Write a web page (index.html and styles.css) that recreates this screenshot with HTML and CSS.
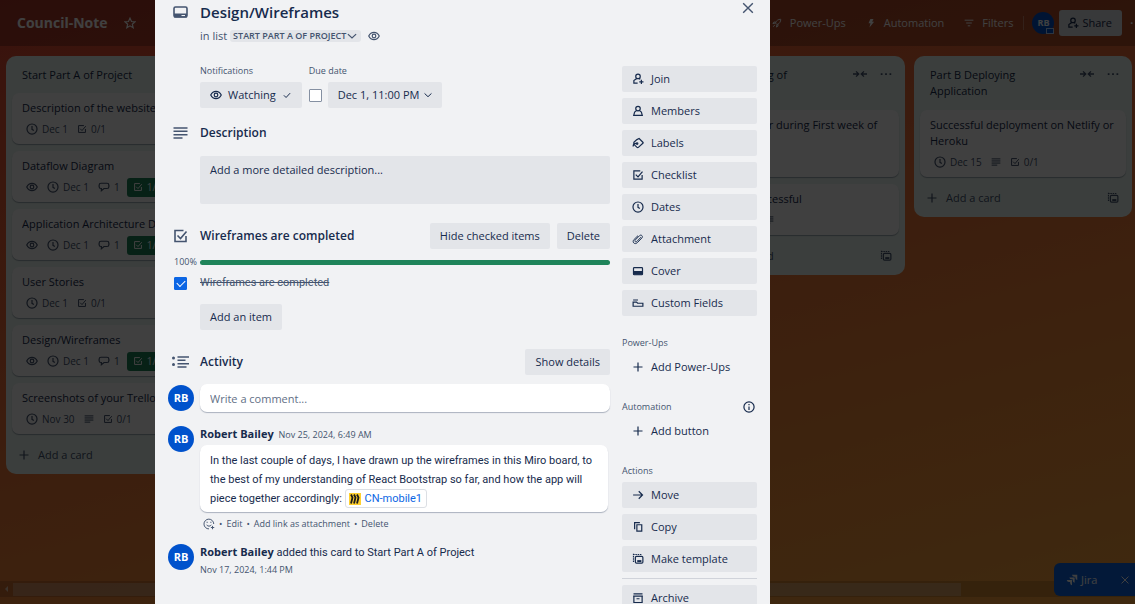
FILE: index.html
```html
<!DOCTYPE html>
<html lang="en">
<head>
<meta charset="utf-8">
<title>Design/Wireframes on Council-Note</title>
<link rel="stylesheet" href="styles.css">
</head>
<body>
<svg class="sprite" aria-hidden="true">
  <symbol id="i-eye" viewBox="0 0 16 16"><path d="M1 8C2.500 5 5 3.200 8 3.200S13.500 5 15 8C13.500 11 11 12.800 8 12.800S2.500 11 1 8z"/><circle cx="8" cy="8" r="2.400"/></symbol>
  <symbol id="i-clock" viewBox="0 0 16 16"><circle cx="8" cy="8" r="6.700"/><path d="M8 4v4.500l2.500 1.500"/></symbol>
  <symbol id="i-check" viewBox="0 0 16 16"><path d="M13.500 8v5.500h-11v-11H11M5 7.500l3 3 6-7"/></symbol>
  <symbol id="i-chat" viewBox="0 0 16 16"><path d="M4 3h8c1.400 0 2.500 1 2.500 2.500v2C14.500 9 13.400 10 12 10H8l-3.500 3v-3H4C2.600 10 1.500 9 1.500 7.500v-2C1.500 4 2.600 3 4 3z"/></symbol>
  <symbol id="i-lines" viewBox="0 0 16 16"><path d="M1 3h14M1 6.300h14M1 9.700h14M1 13h9"/></symbol>
  <symbol id="i-plus" viewBox="0 0 16 16"><path d="M8 2v12M2 8h12"/></symbol>
  <symbol id="i-close" viewBox="0 0 16 16"><path d="M2.500 2.500l11 11M13.500 2.500l-11 11"/></symbol>
  <symbol id="i-down" viewBox="0 0 16 16"><path d="M2.500 5.500L8 10.700l5.500-5.200"/></symbol>
  <symbol id="i-tick" viewBox="0 0 16 16"><path d="M3 8.500l3.500 3.500L13 5"/></symbol>
  <symbol id="i-star" viewBox="0 0 16 16"><path d="M8 1.500l2 4.500 4.700.4-3.600 3.200 1.100 4.700L8 11.800l-4.200 2.500 1.100-4.700L1.300 6.400 6 6z"/></symbol>
  <symbol id="i-join" viewBox="0 0 16 16"><circle cx="8" cy="4.500" r="3"/><path d="M6.300 7.200L2.500 10v3.500h5M9.500 7.300l1.500 1M12.500 9v5.500M9.700 11.700h5.600"/></symbol>
  <symbol id="i-member" viewBox="0 0 16 16"><circle cx="8" cy="4.700" r="3"/><path d="M6.300 7.200L3.500 9.500 2.300 13.700h11.400L12.500 9.500 9.700 7.200"/></symbol>
  <symbol id="i-label" viewBox="0 0 16 16"><path d="M6.500 3.500l3-1.500 5 5c.4.400.4 1 0 1.400l-6 5.400c-.6.500-1.200.5-1.800 0L2.500 9.800V7z"/><path d="M1.500 12.500c0-2.500 2-4 4-4"/><circle cx="6.800" cy="8.700" r="1"/></symbol>
  <symbol id="i-clip" viewBox="0 0 16 16"><path d="M12 5.500l-5.500 5.800c-.7.700-1.600.7-2.200.1-.6-.6-.5-1.500.2-2.200L10 3.600c1-1 2.300-1 3.200-.1.900.9.900 2.200-.1 3.200l-6 6.200c-1.600 1.600-3.600 1.500-4.700.4-1.200-1.200-1.200-3.100.4-4.700L8 3.500" stroke-width="1.300"/></symbol>
  <symbol id="i-cover" viewBox="0 0 16 16"><rect x="2" y="3.500" width="12" height="9.500" rx="1"/><path class="solid" d="M2 8h12v5H2z"/></symbol>
  <symbol id="i-fields" viewBox="0 0 16 16"><path d="M1.500 4h6.500M1.500 6.800h4.500l1.500 1.500h7v4h-13z"/></symbol>
  <symbol id="i-info" viewBox="0 0 16 16"><circle cx="8" cy="8" r="6.800"/><path d="M8 7.200V12M8 4v1.600"/></symbol>
  <symbol id="i-arrow" viewBox="0 0 16 16"><path d="M1.500 8h12.500M9 3l5 5-5 5"/></symbol>
  <symbol id="i-copy" viewBox="0 0 16 16"><path d="M6.500 5h6.500v8.500H6.500z"/><path d="M3.500 11V2.200h7"/></symbol>
  <symbol id="i-template" viewBox="0 0 16 16"><rect x="4.500" y="4.500" width="10" height="9" rx="1.500"/><path class="solid" d="M7 9.500h5.500v2.500H7z"/><path d="M2 1v11.500M1.500 2h11" stroke-dasharray="2 1"/></symbol>
  <symbol id="i-archive" viewBox="0 0 16 16"><path d="M2 2.500h12M1.500 5.500h13M2.500 6v8h11V6M6 9h4"/></symbol>
  <symbol id="i-card" viewBox="0 0 16 16"><rect x="1.500" y="3" width="13" height="10" rx="1.500"/><path class="solid" d="M1.500 9.500h13v4h-13zM9 11v1.300h3.500V11z" fill-rule="evenodd"/></symbol>
  <symbol id="i-activity" viewBox="0 0 18 16"><path d="M6 3h11.500M6 6.300h8M6 9.700h11.500M6 13h9"/><circle class="solid" cx="2" cy="4" r="1.500"/><circle class="solid" cx="2" cy="10.500" r="1.500"/></symbol>
  <symbol id="i-collapse" viewBox="0 0 16 16"><path d="M0 8h6M3.500 5L6.500 8l-3 3M16 8h-6M12.500 5l-3 3 3 3"/></symbol>
  <symbol id="i-dots" viewBox="0 0 16 16"><path class="solid" d="M2 7h2v2H2zM7 7h2v2H7zM12 7h2v2h-2z"/></symbol>
  <symbol id="i-rocket" viewBox="0 0 16 16"><path d="M5.500 8C7 4 10 2 14 2c0 4-2 7-6 8.500zM6 6.500H3L1.500 9l4-1M9.500 10v3L7 14.500 8 10.500M4.500 11l-2.500 3"/></symbol>
  <symbol id="i-bolt" viewBox="0 0 16 16"><path class="solid" d="M7 1.500h5L9.800 6H13l-7.500 9 1.700-6.500H4z"/></symbol>
  <symbol id="i-filter" viewBox="0 0 16 16"><path d="M1 3.500h14M3.500 8h9M6 12.500h4"/></symbol>
  <symbol id="i-smile" viewBox="0 0 16 16"><path d="M14.300 8A6.500 6.500 0 1 0 8 14.500M5 9c.5 2.500 5.500 2.500 6 0M5.500 5v1.500M10.500 5v1.500M12.700 10.500v4.500M10.500 12.700h4.500" stroke-width="1.300"/></symbol>
  <symbol id="i-jira" viewBox="0 0 16 16"><path class="solid" d="M8 1h7v7a3 3 0 0 1-2.500-3V3.500H11A3 3 0 0 1 8 1zM4.500 4.500h7v7A3 3 0 0 1 9 8.500V7H7.500a3 3 0 0 1-3-2.500zM1 8h7v7a3 3 0 0 1-2.500-3v-1.500H4A3 3 0 0 1 1 8z"/></symbol>
</svg>

<div class="board">
  <header class="topbar">
    <h1 class="board-name">Council-Note</h1>
    <button class="bare star" aria-label="Star board"><svg class="ic"><use href="#i-star"/></svg></button>
    <nav class="tools">
      <button class="bare tool"><svg class="ic s10"><use href="#i-rocket"/></svg>Power-Ups</button>
      <button class="bare tool"><svg class="ic s10"><use href="#i-bolt"/></svg>Automation</button>
      <button class="bare tool"><svg class="ic s10"><use href="#i-filter"/></svg>Filters</button>
      <span class="rule"></span>
      <span class="avatar small">RB<i class="rank"></i></span>
      <button class="share"><svg class="ic"><use href="#i-join"/></svg>Share</button>
      <button class="bare more" aria-label="More"><svg class="ic s14"><use href="#i-dots"/></svg></button>
    </nav>
  </header>

  <main class="lists">
    <section class="list first">
      <h2 class="list-name">Start Part A of Project</h2>
      <article class="card"><h3>Description of the website</h3><p class="badges"><span><svg class="ic"><use href="#i-clock"/></svg>Dec 1</span><span><svg class="ic s10"><use href="#i-check"/></svg>0/1</span></p></article>
      <article class="card"><h3>Dataflow Diagram</h3><p class="badges"><svg class="ic"><use href="#i-eye"/></svg><span><svg class="ic"><use href="#i-clock"/></svg>Dec 1</span><span><svg class="ic"><use href="#i-chat"/></svg>1</span><span class="done"><svg class="ic s10"><use href="#i-check"/></svg>1/1</span></p></article>
      <article class="card"><h3>Application Architecture Diagram</h3><p class="badges"><svg class="ic"><use href="#i-eye"/></svg><span><svg class="ic"><use href="#i-clock"/></svg>Dec 1</span><span><svg class="ic"><use href="#i-chat"/></svg>1</span><span class="done"><svg class="ic s10"><use href="#i-check"/></svg>1/1</span></p></article>
      <article class="card"><h3>User Stories</h3><p class="badges"><span><svg class="ic"><use href="#i-clock"/></svg>Dec 1</span><span><svg class="ic s10"><use href="#i-check"/></svg>0/1</span></p></article>
      <article class="card"><h3>Design/Wireframes</h3><p class="badges"><svg class="ic"><use href="#i-eye"/></svg><span><svg class="ic"><use href="#i-clock"/></svg>Dec 1</span><span><svg class="ic"><use href="#i-chat"/></svg>1</span><span class="done"><svg class="ic s10"><use href="#i-check"/></svg>1/1</span></p></article>
      <article class="card"><h3>Screenshots of your Trello</h3><p class="badges"><span><svg class="ic"><use href="#i-clock"/></svg>Nov 30</span><svg class="ic s10"><use href="#i-lines"/></svg><span><svg class="ic s10"><use href="#i-check"/></svg>0/1</span></p></article>
      <div class="list-foot"><button class="bare add"><svg class="ic"><use href="#i-plus"/></svg>Add a card</button><svg class="ic"><use href="#i-template"/></svg></div>
    </section>

    <section class="list fourth">
      <div class="list-head"><h2 class="list-name">Part A Testing of Application</h2><svg class="ic s14"><use href="#i-collapse"/></svg><svg class="ic s14"><use href="#i-dots"/></svg></div>
      <article class="card tall"><h3>Completed or during First week of<br>December</h3></article>
      <article class="card"><h3>Unit test successful</h3><p class="badges"><span><svg class="ic"><use href="#i-clock"/></svg>Dec 15</span><svg class="ic s10"><use href="#i-lines"/></svg></p></article>
      <div class="list-foot"><button class="bare add"><svg class="ic"><use href="#i-plus"/></svg>Add a card</button><svg class="ic"><use href="#i-template"/></svg></div>
    </section>

    <section class="list fifth">
      <div class="list-head"><h2 class="list-name">Part B Deploying Application</h2><svg class="ic s14"><use href="#i-collapse"/></svg><svg class="ic s14"><use href="#i-dots"/></svg></div>
      <article class="card tall"><h3>Successful deployment on Netlify or Heroku</h3><p class="badges"><span><svg class="ic"><use href="#i-clock"/></svg>Dec 15</span><svg class="ic s10"><use href="#i-lines"/></svg><span><svg class="ic s10"><use href="#i-check"/></svg>0/1</span></p></article>
      <div class="list-foot"><button class="bare add"><svg class="ic"><use href="#i-plus"/></svg>Add a card</button><svg class="ic"><use href="#i-template"/></svg></div>
    </section>
  </main>
  <div class="scroller"><i class="scroll-arrow"></i><i class="thumb"></i></div>
  <div class="jira"><svg class="ic"><use href="#i-jira"/></svg>Jira<button class="bare" aria-label="Dismiss"><svg class="ic s10"><use href="#i-close"/></svg></button></div>
</div>

<div class="overlay">
  <div class="dialog" role="dialog" aria-labelledby="card-title">
    <header class="row head">
      <svg class="ic s16 lead"><use href="#i-card"/></svg>
      <h2 id="card-title" class="title">Design/Wireframes</h2>
      <button class="bare close" aria-label="Close"><svg class="ic s14"><use href="#i-close"/></svg></button>
    </header>
    <p class="in-list">in list <button class="where">START PART A OF PROJECT<svg class="ic"><use href="#i-down"/></svg></button><svg class="ic"><use href="#i-eye"/></svg></p>

    <div class="columns">
      <div class="content">
        <div class="facts">
          <div><h4 class="small-label">Notifications</h4><button class="btn"><svg class="ic"><use href="#i-eye"/></svg>Watching<svg class="ic s10"><use href="#i-tick"/></svg></button></div>
          <div><h4 class="small-label">Due date</h4><div class="due"><input type="checkbox" class="box" aria-label="Due date complete"><button class="btn">Dec 1, 11:00 PM<svg class="ic s10"><use href="#i-down"/></svg></button></div></div>
        </div>

        <section class="description">
          <div class="row"><svg class="ic s16 lead"><use href="#i-lines"/></svg><h3 class="heading">Description</h3></div>
          <button class="desc-box">Add a more detailed description...</button>
        </section>

        <section class="checklist">
          <div class="row"><svg class="ic s16 lead"><use href="#i-check"/></svg><h3 class="heading">Wireframes are completed</h3><button class="btn">Hide checked items</button><button class="btn">Delete</button></div>
          <div class="row progress"><span class="percent">100%</span><div class="bar"></div></div>
          <div class="row item"><input type="checkbox" id="item" class="box lead" checked><label for="item">Wireframes are completed</label></div>
          <button class="btn add-item">Add an item</button>
        </section>

        <section class="activity">
          <div class="row"><svg class="ic s18 lead"><use href="#i-activity"/></svg><h3 class="heading">Activity</h3><button class="btn">Show details</button></div>
          <div class="row write"><span class="avatar lead">RB</span><input type="text" class="comment-input" placeholder="Write a comment..." aria-label="Write a comment"></div>
          <div class="row entry"><span class="avatar lead">RB</span>
            <div class="entry-body">
              <p class="who"><b>Robert Bailey</b> <a class="when" href="#">Nov 25, 2024, 6:49 AM</a></p>
              <div class="bubble">In the last couple of days, I have drawn up the wireframes in this Miro board, to the best of my understanding of React Bootstrap so far, and how the app will<br>piece together accordingly: <a class="chip" href="#"><svg class="miro" viewBox="0 0 12 12"><rect width="12" height="12" fill="#ffd02f"/><path d="M2 1.500l1.500 3L2 10.500M5 1.500l1.500 3L5 10.500M8 1.500l1.500 3L8 10.500" fill="none" stroke="#1c1c1e" stroke-width="1.800"/></svg>CN-mobile1</a></div>
              <p class="acts"><button class="bare" aria-label="React"><svg class="ic"><use href="#i-smile"/></svg></button><span>•</span><a href="#">Edit</a><span>•</span><a href="#">Add link as attachment</a><span>•</span><a href="#">Delete</a></p>
            </div>
          </div>
          <div class="row entry second"><span class="avatar lead">RB</span>
            <div class="entry-body"><p class="who"><b>Robert Bailey</b> <span class="event">added this card to Start Part A of Project</span></p><p class="who"><a class="when" href="#">Nov 17, 2024, 1:44 PM</a></p></div>
          </div>
        </section>
      </div>

      <aside class="side">
        <button class="btn"><svg class="ic"><use href="#i-join"/></svg>Join</button>
        <button class="btn"><svg class="ic"><use href="#i-member"/></svg>Members</button>
        <button class="btn"><svg class="ic"><use href="#i-label"/></svg>Labels</button>
        <button class="btn"><svg class="ic"><use href="#i-check"/></svg>Checklist</button>
        <button class="btn"><svg class="ic"><use href="#i-clock"/></svg>Dates</button>
        <button class="btn"><svg class="ic"><use href="#i-clip"/></svg>Attachment</button>
        <button class="btn"><svg class="ic"><use href="#i-cover"/></svg>Cover</button>
        <button class="btn"><svg class="ic"><use href="#i-fields"/></svg>Custom Fields</button>
        <h4 class="small-label group">Power-Ups</h4>
        <button class="btn ghost"><svg class="ic"><use href="#i-plus"/></svg>Add Power-Ups</button>
        <h4 class="small-label group">Automation<svg class="ic"><use href="#i-info"/></svg></h4>
        <button class="btn ghost"><svg class="ic"><use href="#i-plus"/></svg>Add button</button>
        <h4 class="small-label group">Actions</h4>
        <button class="btn"><svg class="ic"><use href="#i-arrow"/></svg>Move</button>
        <button class="btn"><svg class="ic"><use href="#i-copy"/></svg>Copy</button>
        <button class="btn"><svg class="ic"><use href="#i-template"/></svg>Make template</button>
        <hr>
        <button class="btn"><svg class="ic"><use href="#i-archive"/></svg>Archive</button>
      </aside>
    </div>
  </div>
</div>
</body>
</html>
```
FILE: styles.css
```css
* { box-sizing: border-box; }
html, body { height: 100%; }
body {
  margin: 0;
  overflow: hidden;
  font: 11px/16px "Open Sans", "Noto Sans", sans-serif;
  color: #172b4d;
}
h1, h2, h3, h4, p { margin: 0; font-size: 11px; font-weight: 400; }
button, input { font: inherit; color: inherit; }
button { cursor: pointer; }
a { color: inherit; text-decoration: none; }
.sprite { display: none; }
.ic { width: 12px; height: 12px; flex: none; fill: none; stroke: currentColor; stroke-width: 1.6; }
.ic.s10 { width: 10px; height: 10px; }
.ic.s14 { width: 14px; height: 14px; }
.ic.s16 { width: 16px; height: 16px; }
.ic.s18 { width: 18px; height: 16px; }
.solid { fill: currentColor; stroke: none; }
.bare { display: flex; align-items: center; padding: 0; border: 0; background: none; }

/* Board */
.board {
  position: relative;
  display: flex;
  flex-direction: column;
  height: 100vh;
  overflow: hidden;
  background: linear-gradient(165deg, #e34935, #faa53d);
}
.topbar {
  display: flex;
  align-items: center;
  flex: none;
  height: 46px;
  padding-left: 17px;
  background: rgba(0, 0, 0, .24);
  color: #fff;
}
.board-name { font-size: 14px; line-height: 20px; font-weight: 700; }
.star { margin-left: 16px; }
.tools { display: flex; align-items: center; margin-left: auto; white-space: nowrap; }
.tool { gap: 8px; margin-right: 20px; font-weight: 500; }
.rule { width: 1px; height: 14px; margin-right: 8px; margin-left: -10px; background: rgba(255, 255, 255, .3); }
.avatar {
  position: relative;
  display: grid;
  place-items: center;
  flex: none;
  width: 26px;
  height: 26px;
  border-radius: 50%;
  background: #0052cc;
  color: #fff;
  font-size: 11px;
  font-weight: 700;
}
.avatar.small { width: 22px; height: 22px; font-size: 9px; }
.rank { position: absolute; right: 0; bottom: 0; width: 8px; height: 6px; border: 1px solid #b3d4ff; background: #0052cc; }
.share {
  display: flex;
  align-items: center;
  gap: 3px;
  height: 26px;
  margin: 0 7px 0 5px;
  padding: 0 10px 0 8px;
  border: 0;
  border-radius: 3px;
  background: #dfe1e6;
  color: #172b4d;
  font-weight: 500;
}
.more { width: 6px; overflow: hidden; }

.lists {
  display: grid;
  grid-template-columns: repeat(5, 218px);
  gap: 9px;
  align-items: start;
  flex: 1;
  min-height: 0;
  padding: 10px 6px;
}
.list {
  display: flex;
  flex-direction: column;
  gap: 7px;
  padding: 11px 6px 11px;
  border-radius: 10px;
  background: #ecf8f2;
}
.first { grid-column: 1; }
.fourth { grid-column: 4; }
.fifth { grid-column: 5; }
.list-name { flex: 1; padding: 0 10px 3px; font-weight: 500; }
.list-head { display: flex; gap: 12px; padding: 0 6px 1px 0; color: #44546f; }
.list-head .list-name { padding-right: 24px; color: #172b4d; }
.card { min-height: 51px; padding: 7px 10px 6px; border-radius: 7px; background: #fff; box-shadow: 0 1px 1px rgba(9, 30, 66, .35); }
.card.tall { min-height: 67px; }
.card h3 { white-space: nowrap; overflow: hidden; }
.card.tall h3 { white-space: normal; }
.badges { display: flex; align-items: center; gap: 9px; height: 18px; margin-top: 4px; padding-left: 4px; color: #44546f; font-size: 10px; }
.badges span { display: flex; align-items: center; gap: 4px; }
.badges .done { height: 19px; margin-left: -2px; padding: 0 6px; border-radius: 3px; background: #1f845a; color: #fff; }
.list-foot { display: flex; align-items: center; justify-content: space-between; padding: 6px 7px 0 6px; color: #44546f; }
.add { gap: 8px; font-weight: 500; }

.scroller { display: flex; align-items: center; flex: none; height: 16px; margin-bottom: 7px; background: rgba(0, 0, 0, .15); }
.scroll-arrow { margin: 0 5px 0 2px; border: 3px solid transparent; border-right-color: #fff9; }
.thumb { width: 83.5%; height: 13px; background: rgba(255, 255, 255, .25); }
.jira {
  position: absolute;
  right: 0;
  bottom: 8px;
  display: flex;
  align-items: center;
  gap: 3px;
  width: 81px;
  height: 33px;
  padding: 0 5px 0 12px;
  border-radius: 6px 0 0 6px;
  background: #0c66e4;
  color: #fff;
}
.jira .bare { margin-left: auto; }

/* Card dialog */
.overlay {
  position: fixed;
  inset: 0;
  display: flex;
  justify-content: center;
  align-items: flex-start;
  padding-right: 210px;
  overflow: hidden;
  background: rgba(0, 0, 0, .75);
}
.dialog { width: 615px; min-height: 100%; padding: 2px 13px 20px; background: #f1f2f4; }
.row { display: flex; align-items: center; }
.row .lead { flex: none; }
.row > svg.lead { width: 32px; padding-right: 7px; color: #44546f; }
.title { flex: 1; font-size: 15px; line-height: 20px; font-weight: 600; }
.close { align-self: flex-start; margin: -1px 2px 0 0; color: #44546f; }
.in-list { display: flex; align-items: center; gap: 3px; height: 16px; margin-top: 6px; padding-left: 32px; color: #44546f; }
.in-list > .ic { margin-left: 4px; }
.where {
  display: flex;
  align-items: center;
  height: 12px;
  padding: 0 3px;
  border: 0;
  border-radius: 3px;
  background: #e3e5e9;
  font-size: 9px;
  font-weight: 600;
}
.columns { display: flex; gap: 12px; margin-top: 19px; }
.content { flex: 1; min-width: 0; }
.side { display: flex; flex-direction: column; gap: 6px; flex: none; width: 135px; padding-top: 3px; }
.small-label { font-size: 9px; line-height: 16px; font-weight: 500; color: #44546f; }
.btn {
  display: flex;
  align-items: center;
  gap: 6px;
  height: 26px;
  padding: 0 10px;
  border: 0;
  border-radius: 2px;
  background: #e3e5e9;
  font-weight: 500;
  white-space: nowrap;
}
.side .btn { gap: 7px; }
.btn.ghost { background: none; }
.side .group { display: flex; align-items: center; justify-content: space-between; height: 16px; margin: 13px 0 -3px; padding-right: 2px; }
.group .ic { color: #172b4d; }
.side hr { width: 100%; height: 1px; margin: 0; border: 0; background: #d0d3da; }

.facts { display: flex; gap: 7px; padding-left: 32px; }
.facts .small-label { margin-bottom: 3px; }
.due { display: flex; align-items: center; gap: 6px; }
.due .btn { gap: 4px; padding-right: 9px; }
.box {
  display: grid;
  place-items: center;
  appearance: none;
  width: 13px;
  height: 13px;
  margin: 0;
  border: 1px solid #8590a2;
  border-radius: 1px;
  background: #fff;
}
.box:checked { border-color: #0c66e4; background: #0c66e4; }
.box:checked::after { content: ""; width: 7px; height: 4px; margin-bottom: 2px; border: solid #fff; border-width: 0 0 1px 1px; transform: rotate(-45deg); }

.heading { flex: 1; font-size: 12px; line-height: 18px; font-weight: 600; }
.description { margin-top: 16px; }
.desc-box {
  display: block;
  width: calc(100% - 32px);
  min-height: 48px;
  margin: 14px 0 0 32px;
  padding: 6px 10px 26px;
  border: 0;
  border-radius: 2px;
  background: #e3e5e9;
  font-weight: 500;
  text-align: left;
}
.checklist { margin-top: 19px; }
.checklist .btn + .btn { margin-left: 7px; }
.progress { height: 16px; margin-top: 5px; }
.percent { width: 32px; padding-left: 6px; color: #44546f; font-size: 9px; }
.bar { flex: 1; height: 5px; border-radius: 3px; background: #1f845a; }
.item { height: 16px; margin-top: 5px; color: #44546f; text-decoration: line-through; }
.item label, .bubble, .event { font-family: Roboto, "Open Sans", sans-serif; }
.item .box { margin: 0 13px 0 6px; }
.add-item { margin: 13px 0 0 32px; }

.activity { margin-top: 19px; }
.row > .avatar { margin-right: 6px; }
.write { margin-top: 9px; }
.comment-input {
  flex: 1;
  min-width: 0;
  height: 28px;
  padding: 0 10px;
  border: 0;
  border-radius: 7px;
  background: #fff;
  box-shadow: 0 1px 1px rgba(9, 30, 66, .3);
}
.comment-input::placeholder { color: #626f86; opacity: 1; }
.entry { align-items: flex-start; margin-top: 14px; }
.entry-body { flex: 1; min-width: 0; }
.when { color: #44546f; font-size: 9px; }
.who .when { margin-left: 2px; }
.who + .who .when { margin-left: 0; }
.bubble {
  margin: 2px 2px 0 0;
  padding: 6px 10px 4px;
  border-radius: 7px;
  background: #fff;
  box-shadow: 0 1px 1px rgba(9, 30, 66, .3);
  line-height: 19px;
}
.chip { display: inline-flex; align-items: center; gap: 4px; height: 19px; padding: 0 4px 0 3px; border: 1px solid #dcdfe4; border-radius: 3px; color: #0c66e4; vertical-align: bottom; }
.miro { width: 12px; height: 12px; }
.acts { display: flex; align-items: center; gap: 4px; margin-top: 4px; padding-left: 3px; color: #44546f; font-size: 9px; }
.second { margin-top: 12px; }
```
